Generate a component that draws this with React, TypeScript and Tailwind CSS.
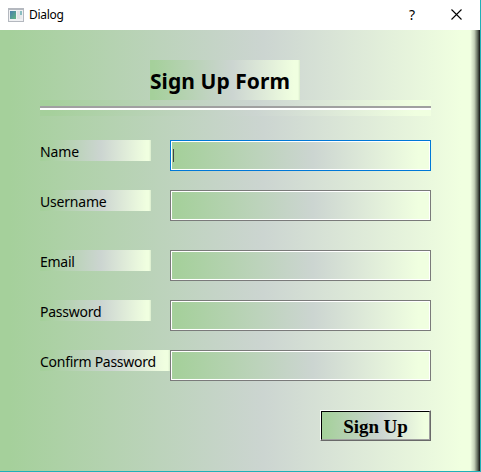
const fields = [
  { label: 'Name', gap: 'mt-6', width: 'w-[110.5px]', text: 'tracking-[-0.1px]', focused: true },
  { label: 'Username', gap: 'mt-[19px]', width: 'w-[110.5px]', text: 'tracking-[-0.2px]' },
  { label: 'Email', gap: 'mt-[29px]', width: 'w-[110.5px]', text: 'tracking-[-0.25px]' },
  { label: 'Password', gap: 'mt-[19px]', width: 'w-[110.5px]', text: 'tracking-[-0.25px]' },
  { label: 'Confirm Password', gap: 'mt-[19px]', width: 'w-[130px]', text: 'tracking-[-0.28px]' },
];

const panel =
  'bg-[linear-gradient(90deg,#a5d09b_0%,#a5d09b_2%,#ccd5d1_55%,#f0ffe0_96%,#f0ffe0_calc(100%-2px),#d9ebcc_100%)]';

const fieldFill =
  'bg-[linear-gradient(90deg,#a5d09b_0%,#a5d09b_2%,#ccd5d1_55%,#f0ffe0_96%,#f0ffe0_100%)]';

function WindowIcon() {
  return (
    <svg width="16" height="14" viewBox="0 0 16 14" shapeRendering="crispEdges">
      <defs>
        <linearGradient id="pane" x1="0" y1="0" x2="1" y2="1">
          <stop offset="0" stopColor="#487eae" />
          <stop offset="1" stopColor="#61b580" />
        </linearGradient>
      </defs>
      <rect width="16" height="14" fill="#b4b8bf" />
      <rect x="1" y="2" width="14" height="11" fill="#f0f1f3" />
      <rect x="2" y="3" width="6" height="8" fill="url(#pane)" />
      <rect x="9" y="3" width="3" height="8" fill="#e1e3e5" />
      <rect x="12" y="3" width="2" height="4" fill="#8abdc0" />
      <rect x="12" y="7" width="2" height="4" fill="#e8eaec" />
    </svg>
  );
}

export default function App() {
  return (
    <div className="h-[472px] w-[481px] overflow-hidden border-r border-b border-[#20b0b8] bg-white font-['Noto_Sans','Liberation_Sans',sans-serif] text-black">
      <header className="flex h-[30px] items-center bg-white pl-2">
        <WindowIcon />
        <span className="ml-[5px] text-[12px] leading-[30px] tracking-[-0.3px]">Dialog</span>
        <span className="ml-auto w-[10px] text-center text-[14px] leading-[30px]">?</span>
        <svg className="mr-[18px] ml-[34px] -mt-[2px]" width="11" height="11" viewBox="0 0 11 11">
          <path d="M.5.5 10.5 10.5M10.5.5.5 10.5" stroke="#000" strokeWidth="1.1" />
        </svg>
      </header>
      <main className="h-[441px] bg-[linear-gradient(90deg,#a5d09b_0%,#a5d09b_2%,#ccd5d1_55%,#f0ffe0_96%,#f0ffe0_98%,#c5d2b9_98.8%,#626a5c_99.5%,#111_100%)] pt-[30px] pr-[49px] pl-10">
        <h1 className={`ml-[110px] h-10 w-[150px] text-[21px] leading-[42px] font-bold tracking-[0.05px] whitespace-nowrap ${panel}`}>
          Sign Up Form
        </h1>
        <div className={`h-4 w-[391px] pt-[6px] ${fieldFill}`}>
          <div className="h-1 border-t-2 border-b-2 border-t-[#a0a0a0] border-b-white" />
        </div>
        <form>
          {fields.map((f) => (
            <div key={f.label} className={`flex h-[31px] items-start ${f.gap}`}>
              <div className="w-[130px]">
                <label className={`block h-[21px] text-[14px] leading-[24px] whitespace-nowrap ${f.width} ${f.text} ${panel}`}>
                  {f.label}
                </label>
              </div>
              <div className={`h-[31px] w-[261px] border ${f.focused ? 'border-[#0078d7]' : 'border-[#7a7a7a]'} bg-white p-px`}>
                <div className={`h-full pt-[7px] pl-px ${fieldFill}`}>
                  {f.focused && <div className="h-[13px] w-px bg-[#444]" />}
                </div>
              </div>
            </div>
          ))}
          <button
            type="button"
            className="mt-[29px] ml-[280px] block h-[31px] w-[111px] border border-t-white border-r-[#696969] border-b-[#696969] border-l-white"
          >
            <span className={`block h-[29px] border border-t-black border-r-[#a0a0a0] border-b-[#a0a0a0] border-l-black text-center font-['Liberation_Serif',serif] text-[19px] leading-[29px] font-bold tracking-[-0.1px] ${fieldFill}`}>
              Sign Up
            </span>
          </button>
        </form>
      </main>
    </div>
  );
}
